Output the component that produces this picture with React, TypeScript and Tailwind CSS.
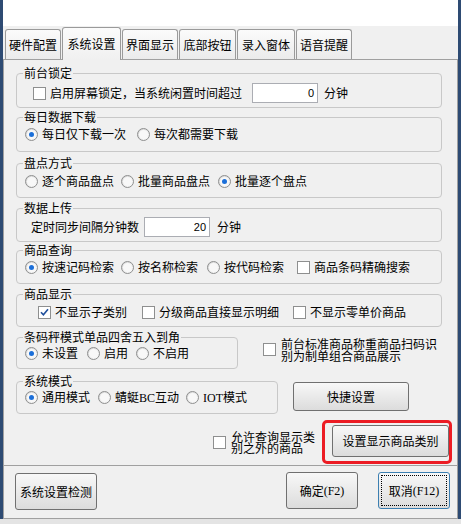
import React from 'react';

function Radio({ checked = false }: { checked?: boolean }) {
  return (
    <span className="flex h-[13px] w-[13px] shrink-0 items-center justify-center rounded-full border border-[#8e8f8f] bg-linear-to-br from-[#d4d4d4] to-[#fdfdfd]">
      <span className="flex h-[9px] w-[9px] items-center justify-center rounded-full bg-[#f8f8f8]">
        {checked && <span className="h-[5px] w-[5px] rounded-full bg-[#1b6fd9]" />}
      </span>
    </span>
  );
}

function Check({ checked = false }: { checked?: boolean }) {
  return (
    <span className="flex h-[13px] w-[13px] shrink-0 items-center justify-center border border-[#8e8f8f] bg-white">
      {checked && (
        <svg width="9" height="9" viewBox="0 0 9 9">
          <path d="M1 4.2 L3.4 6.8 L8 1.2" fill="none" stroke="#1f4f9c" strokeWidth="1.6" />
        </svg>
      )}
    </span>
  );
}

function Opt({ type, checked, label, className = '' }: { type: 'radio' | 'check'; checked?: boolean; label: React.ReactNode; className?: string }) {
  return (
    <div className={'flex h-[16px] items-center gap-[4px] whitespace-nowrap leading-[16px] ' + className}>
      {type === 'radio' ? <Radio checked={checked} /> : <Check checked={checked} />}
      <span>{label}</span>
    </div>
  );
}

function Legend({ children }: { children: React.ReactNode }) {
  return <legend className="ml-[6px] px-px leading-[14px]">{children}</legend>;
}

function NumBox({ value }: { value: string }) {
  return (
    <div className="flex h-[20px] w-[66px] shrink-0 items-center justify-end border border-[#abadb3] bg-white pr-[3px] font-['Liberation_Sans',sans-serif] text-[11px]">
      {value}
    </div>
  );
}

function Btn({ children, className = '' }: { children: React.ReactNode; className?: string }) {
  return (
    <button className={'flex shrink-0 items-center justify-center rounded-[3px] border bg-linear-to-b from-[#f8f8f8] to-[#dcdcdc] leading-[14px] ' + className}>
      {children}
    </button>
  );
}

// SimSun-like latin glyphs in the original
function Ascii({ children }: { children: React.ReactNode }) {
  return <span className="font-['Liberation_Serif',serif] text-[12px]">{children}</span>;
}

const tabs = ['硬件配置', '系统设置', '界面显示', '底部按钮', '录入窗体', '语音提醒'];
const tabWidths = ['w-[56px]', 'w-[59px]', 'w-[56px]', 'w-[57px]', 'w-[58px]', 'w-[56px]'];

export default function App() {
  return (
    <div className="flex h-[524px] w-[461px] flex-col bg-[#2e4b73] font-['Noto_Sans_CJK_SC',sans-serif] text-[12px] text-black">
      <div className="ml-[3px] flex h-[519px] w-[455px] flex-col bg-[#f0f0f0]">
        <div className="h-[26px] bg-white" />

        {/* tab strip */}
        <div className="flex h-[33px] items-end gap-px pl-[2px]">
          {tabs.map((t, i) =>
            i === 1 ? (
              <div
                key={t}
                className={'relative z-10 -mb-px flex h-[33px] items-center justify-center rounded-t-[3px] border-x border-t border-[#9a9a9a] bg-linear-to-b from-[#fbfbfb] to-[#f0f0f0] pb-[1px] ' + tabWidths[i]}
              >
                {t}
              </div>
            ) : (
              <div
                key={t}
                className={'flex h-[30px] items-center justify-center rounded-t-[3px] border-x border-t border-[#9a9a9a] bg-linear-to-b from-[#fbfbfb] to-[#ebebeb] ' + tabWidths[i]}
              >
                {t}
              </div>
            )
          )}
        </div>

        {/* tab page */}
        <div className="flex h-[407px] flex-col border border-[#a0a0a0]">
          <fieldset className="ml-[12px] mt-[6px] w-[426px] rounded-[4px] border border-[#c8c8c8]">
            <Legend>前台锁定</Legend>
            <div className="flex h-[27px] items-start pt-[3px]">
              <div className="flex h-[20px] items-center">
                <Opt type="check" className="ml-[16px]" label="启用屏幕锁定，当系统闲置时间超过" />
                <div className="ml-[10px]">
                  <NumBox value="0" />
                </div>
                <span className="ml-[6px]">分钟</span>
              </div>
            </div>
          </fieldset>

          <fieldset className="ml-[12px] mt-[2px] w-[426px] rounded-[4px] border border-[#c8c8c8]">
            <Legend>每日数据下载</Legend>
            <div className="flex h-[27px] items-start pt-[2px]">
              <Opt type="radio" checked className="ml-[8px]" label="每日仅下载一次" />
              <Opt type="radio" className="ml-[11px]" label="每次都需要下载" />
            </div>
          </fieldset>

          <fieldset className="ml-[12px] mt-[4px] w-[426px] rounded-[4px] border border-[#c8c8c8]">
            <Legend>盘点方式</Legend>
            <div className="flex h-[27px] items-start pt-[3px]">
              <Opt type="radio" className="ml-[8px]" label="逐个商品盘点" />
              <Opt type="radio" className="ml-[7px]" label="批量商品盘点" />
              <Opt type="radio" checked className="ml-[8px]" label="批量逐个盘点" />
            </div>
          </fieldset>

          <fieldset className="ml-[12px] mt-[3px] w-[426px] rounded-[4px] border border-[#c8c8c8]">
            <Legend>数据上传</Legend>
            <div className="flex h-[26px] items-start pt-[2px]">
              <div className="flex h-[20px] items-center">
                <span className="ml-[14px]">定时同步间隔分钟数</span>
                <div className="ml-[5px]">
                  <NumBox value="20" />
                </div>
                <span className="ml-[7px]">分钟</span>
              </div>
            </div>
          </fieldset>

          <fieldset className="ml-[12px] mt-[1px] w-[426px] rounded-[4px] border border-[#c8c8c8]">
            <Legend>商品查询</Legend>
            <div className="flex h-[26px] items-start pt-[2px]">
              <Opt type="radio" checked className="ml-[8px]" label="按速记码检索" />
              <Opt type="radio" className="ml-[7px]" label="按名称检索" />
              <Opt type="radio" className="ml-[9px]" label="按代码检索" />
              <Opt type="check" className="ml-[13px]" label="商品条码精确搜索" />
            </div>
          </fieldset>

          <fieldset className="ml-[12px] mt-[3px] w-[426px] rounded-[4px] border border-[#c8c8c8]">
            <Legend>商品显示</Legend>
            <div className="flex h-[25px] items-start pt-[3px]">
              <Opt type="check" checked className="ml-[21px]" label="不显示子类别" />
              <Opt type="check" className="ml-[15px]" label="分级商品直接显示明细" />
              <Opt type="check" className="ml-[14px]" label="不显示零单价商品" />
            </div>
          </fieldset>

          {/* rounding group + weighing option */}
          <div className="ml-[12px] mt-[3px] flex items-center">
            <fieldset className="w-[222px] rounded-[4px] border border-[#c8c8c8]">
              <Legend>条码秤模式单品四舍五入到角</Legend>
              <div className="flex h-[24px] items-start pt-[1px]">
                <Opt type="radio" checked className="ml-[8px]" label="未设置" />
                <Opt type="radio" className="ml-[9px]" label="启用" />
                <Opt type="radio" className="ml-[8px]" label="不启用" />
              </div>
            </fieldset>
            <div className="ml-[25px] flex items-center gap-[5px]">
              <Check />
              <span className="w-[157px] leading-[12px]">前台标准商品称重商品扫码识别为制单组合商品展示</span>
            </div>
          </div>

          {/* system mode + quick settings */}
          <div className="ml-[12px] mt-[5px] flex items-start">
            <fieldset className="w-[262px] rounded-[4px] border border-[#c8c8c8]">
              <Legend>系统模式</Legend>
              <div className="flex h-[25px] items-start pt-[1px]">
                <Opt type="radio" checked className="ml-[8px]" label="通用模式" />
                <Opt type="radio" className="ml-[8px]" label={<>蜻蜓<Ascii>BC</Ascii>互动</>} />
                <Opt type="radio" className="ml-[7px]" label={<><Ascii>IOT</Ascii>模式</>} />
              </div>
            </fieldset>
            <Btn className="ml-[15px] mt-[8px] h-[29px] w-[116px] border-[#707070]">快捷设置</Btn>
          </div>

          {/* category option */}
          <div className="mt-[6px] flex items-center">
            <div className="ml-[209px] flex items-center gap-[5px]">
              <Check />
              <span className="w-[85px] leading-[11px]">允许查询显示类别之外的商品</span>
            </div>
            <div className="ml-[6px] flex rounded-[5px] border-[3px] border-[#ec1c24] pb-[4px] pl-[7px] pt-[2px]">
              <Btn className="h-[32px] w-[117px] border-[#707070]">设置显示商品类别</Btn>
            </div>
          </div>
        </div>

        {/* bottom buttons */}
        <div className="flex h-[53px] items-start justify-between border-x border-b border-[#a0a0a0] pl-[11px] pr-[7px] pt-[6px]">
          <Btn className="mt-[1px] h-[37px] w-[82px] border-[#707070]">系统设置检测</Btn>
          <div className="flex gap-[20px]">
            <Btn className="h-[37px] w-[72px] border-[#707070]">
              确定<Ascii>(F2)</Ascii>
            </Btn>
            <Btn className="h-[37px] w-[72px] border-[#3c7fb1] outline-1 -outline-offset-4 outline-black outline-dotted">
              取消<Ascii>(F12)</Ascii>
            </Btn>
          </div>
        </div>
      </div>
      <div className="h-[5px] bg-[#e4e4e4]" />
    </div>
  );
}
